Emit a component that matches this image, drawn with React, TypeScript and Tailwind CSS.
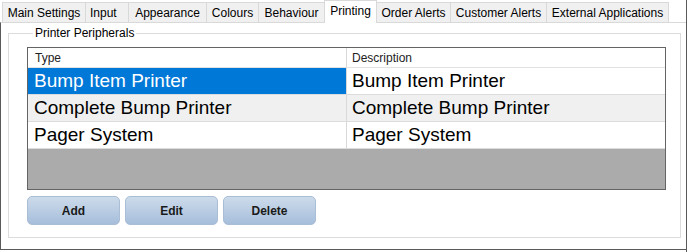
import React from "react";

const tabs: { label: string; w: number; pl?: number; selected?: boolean }[] = [
  { label: "Main Settings", w: 84 },
  { label: "Input", w: 43, pl: 4 },
  { label: "Appearance", w: 78 },
  { label: "Colours", w: 52 },
  { label: "Behaviour", w: 66 },
  { label: "Printing", w: 52, selected: true },
  { label: "Order Alerts", w: 74 },
  { label: "Customer Alerts", w: 96 },
  { label: "External Applications", w: 122 },
];

const rows = [
  { type: "Bump Item Printer", desc: "Bump Item Printer", selected: true, alt: false },
  { type: "Complete Bump Printer", desc: "Complete Bump Printer", selected: false, alt: true },
  { type: "Pager System", desc: "Pager System", selected: false, alt: false },
];

function Btn({ label }: { label: string }) {
  return (
    <button className="h-[29px] w-[93px] rounded-[5px] border border-[#a9bdd5] bg-linear-to-b from-[#cddbeb] to-[#a6bedb] text-[12px] font-bold leading-none text-[#1a1a1a]">
      {label}
    </button>
  );
}

export default function App() {
  return (
    <div
      className="flex h-[252px] w-[687px] flex-col border-r border-[#5a5a5a] bg-white text-black"
      style={{ fontFamily: '"Liberation Sans", Arial, sans-serif' }}
    >
      <div className="relative z-10 flex h-[22px] items-end pl-[2px]">
        {tabs.map((t, i) =>
          t.selected ? (
            <div
              key={i}
              className="-mb-px -ml-px flex h-[23px] items-start justify-center border-x border-t border-[#d9d9d9] bg-white pt-[3px] text-[12px] leading-[14px]"
              style={{ width: t.w + 1 }}
            >
              {t.label}
            </div>
          ) : (
            <div
              key={i}
              className={`flex h-[20px] items-center border-t border-[#d9d9d9] bg-[#f0f0f0] text-[12px] leading-[14px] ${
                i === 0 ? "border-l" : ""
              } border-r ${t.pl ? "justify-start" : "justify-center"}`}
              style={{ width: t.w, paddingLeft: t.pl }}
            >
              {t.label}
            </div>
          )
        )}
      </div>
      <div className="h-[228px] border-b border-l border-t border-b-[#5a5a5a] border-l-[#5a5a5a] border-t-[#d9d9d9] pl-[7px] pr-[5px]">
        <fieldset className="mt-[3px] h-[212px] border border-[#dcdcdc] pl-[18px]">
          <legend className="ml-[6px] px-[2px] text-[12px] leading-[14px]">Printer Peripherals</legend>
          <div className="mt-[7px] flex h-[143px] w-[639px] flex-col border border-[#646464] bg-[#ababab]">
            <div className="flex h-[20px] shrink-0 border-b border-[#e2e2e2] bg-white text-[12px] leading-[14px] text-[#222]">
              <div className="flex w-[319px] items-center border-r border-[#d9d9d9] pl-[7px]">Type</div>
              <div className="flex flex-1 items-center pl-[5px]">Description</div>
            </div>
            {rows.map((r, i) => (
              <div
                key={i}
                className={`flex h-[27px] shrink-0 border-b border-[#dcdcdc] text-[19px] leading-[22px] ${
                  r.alt ? "bg-[#f0f0f0]" : "bg-white"
                }`}
              >
                <div
                  className={`flex w-[319px] items-center border-r border-[#d9d9d9] pl-[6px] ${
                    r.selected ? "bg-[#0078d7] text-white" : ""
                  }`}
                >
                  {r.type}
                </div>
                <div className="flex flex-1 items-center pl-[5px]">{r.desc}</div>
              </div>
            ))}
          </div>
          <div className="mt-[6px] flex gap-[5px]">
            <Btn label="Add" />
            <Btn label="Edit" />
            <Btn label="Delete" />
          </div>
        </fieldset>
      </div>
    </div>
  );
}
